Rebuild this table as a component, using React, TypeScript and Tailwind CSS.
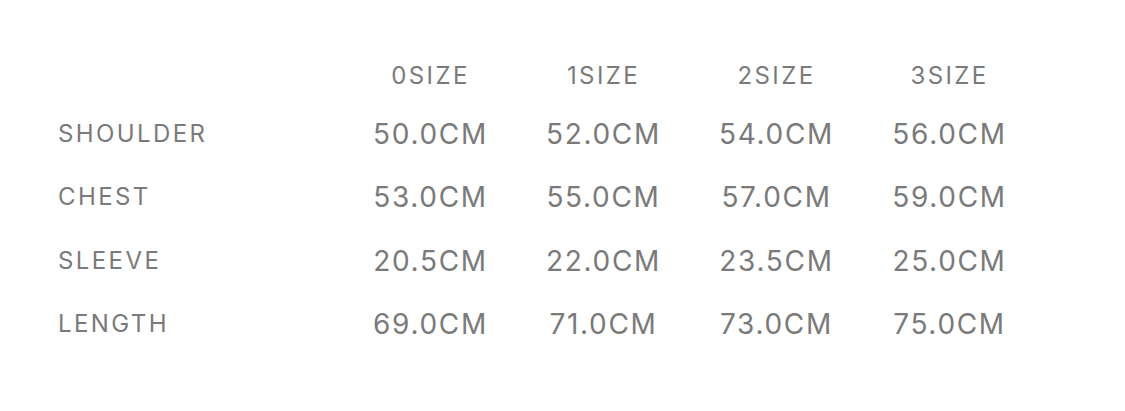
const SIZES = ["0SIZE", "1SIZE", "2SIZE", "3SIZE"];

const ROWS: { label: string; values: string[] }[] = [
  { label: "SHOULDER", values: ["50.0CM", "52.0CM", "54.0CM", "56.0CM"] },
  { label: "CHEST", values: ["53.0CM", "55.0CM", "57.0CM", "59.0CM"] },
  { label: "SLEEVE", values: ["20.5CM", "22.0CM", "23.5CM", "25.0CM"] },
  { label: "LENGTH", values: ["69.0CM", "71.0CM", "73.0CM", "75.0CM"] },
];

export default function App() {
  return (
    <div className="w-[1125px] h-[411px] bg-white pl-[58px] pt-[50px] text-[#7a7a7a] font-['Inter',sans-serif]">
      <div className="grid grid-cols-[286px_173px_173px_173px_173px] grid-rows-[52px_63.5px_63.5px_63.5px_63.5px] items-center">
        <div />
        {SIZES.map((s) => (
          <div key={s} className="text-center text-[24px] tracking-[0.1em] leading-none">
            {s}
          </div>
        ))}
        {ROWS.map((r) => (
          <div key={r.label} className="contents">
            <div className="text-[24px] tracking-[0.1em] leading-none">{r.label}</div>
            {r.values.map((v, i) => (
              <div key={i} className="text-center text-[28px] tracking-[0.06em] leading-none">
                {v}
              </div>
            ))}
          </div>
        ))}
      </div>
    </div>
  );
}
